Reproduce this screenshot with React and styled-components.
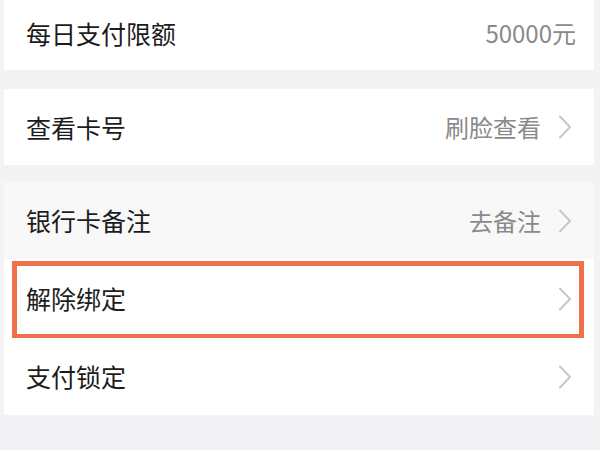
import React from "react";
import styled, { createGlobalStyle } from "styled-components";

const Global = createGlobalStyle`
  html, body { margin: 0; padding: 0; background: #f3f3f5; }
  body { font-family: "Noto Sans CJK SC", "Noto Sans", sans-serif; }
`;

const Page = styled.div`
  width: 600px;
  height: 450px;
  overflow: hidden;
  box-sizing: border-box;
  padding: 0 6px 0 4px;
  display: flex;
  flex-direction: column;
  background: #f3f3f5;
`;

const Card = styled.div`
  background: #ffffff;
  margin-top: ${(p) => p.$gap || 0}px;
  display: flex;
  flex-direction: column;
`;

const Row = styled.div`
  position: relative;
  height: ${(p) => p.$h}px;
  box-sizing: border-box;
  padding: 0 22px 0 22px;
  padding-bottom: ${(p) => p.$pb || 0}px;
  display: flex;
  align-items: center;
  justify-content: space-between;
  background: ${(p) => (p.$pressed ? "#f8f8f8" : "#ffffff")};

  ${(p) =>
    p.$highlight &&
    `
    &::after {
      content: "";
      position: absolute;
      top: 2px;
      left: 8px;
      right: 10px;
      bottom: -1px;
      border: 5px solid #f0704a;
      pointer-events: none;
    }
  `}
`;

const Label = styled.span`
  font-size: 25px;
  color: #1c1c1c;
  line-height: 1;
`;

const Right = styled.div`
  display: flex;
  align-items: center;
  gap: 17px;
  margin-right: ${(p) => (p.$chevron ? 0 : -4)}px;
`;

const Value = styled.span`
  font-size: 24px;
  color: #8a8a8a;
  line-height: 1;
`;

const Chevron = () => (
  <svg width="14" height="24" viewBox="0 0 14 24" fill="none">
    <path d="M2 1.5 L12 12 L2 22.5" stroke="#c8c8c8" strokeWidth="2" strokeLinecap="round" strokeLinejoin="round" />
  </svg>
);

function Item({ label, value, chevron = true, h, pb, pressed, highlight }) {
  return (
    <Row $h={h} $pb={pb} $pressed={pressed} $highlight={highlight}>
      <Label>{label}</Label>
      <Right $chevron={chevron}>
        {value && <Value>{value}</Value>}
        {chevron && <Chevron />}
      </Right>
    </Row>
  );
}

export default function App() {
  return (
    <>
      <Global />
      <Page>
        <Card>
          <Item label="每日支付限额" value="50000元" chevron={false} h={70} pb={4} />
        </Card>
        <Card $gap={19}>
          <Item label="查看卡号" value="刷脸查看" h={76} />
        </Card>
        <Card $gap={17}>
          <Item label="银行卡备注" value="去备注" h={77} pressed />
          <Item label="解除绑定" h={79} highlight />
          <Item label="支付锁定" h={77} />
        </Card>
      </Page>
    </>
  );
}
